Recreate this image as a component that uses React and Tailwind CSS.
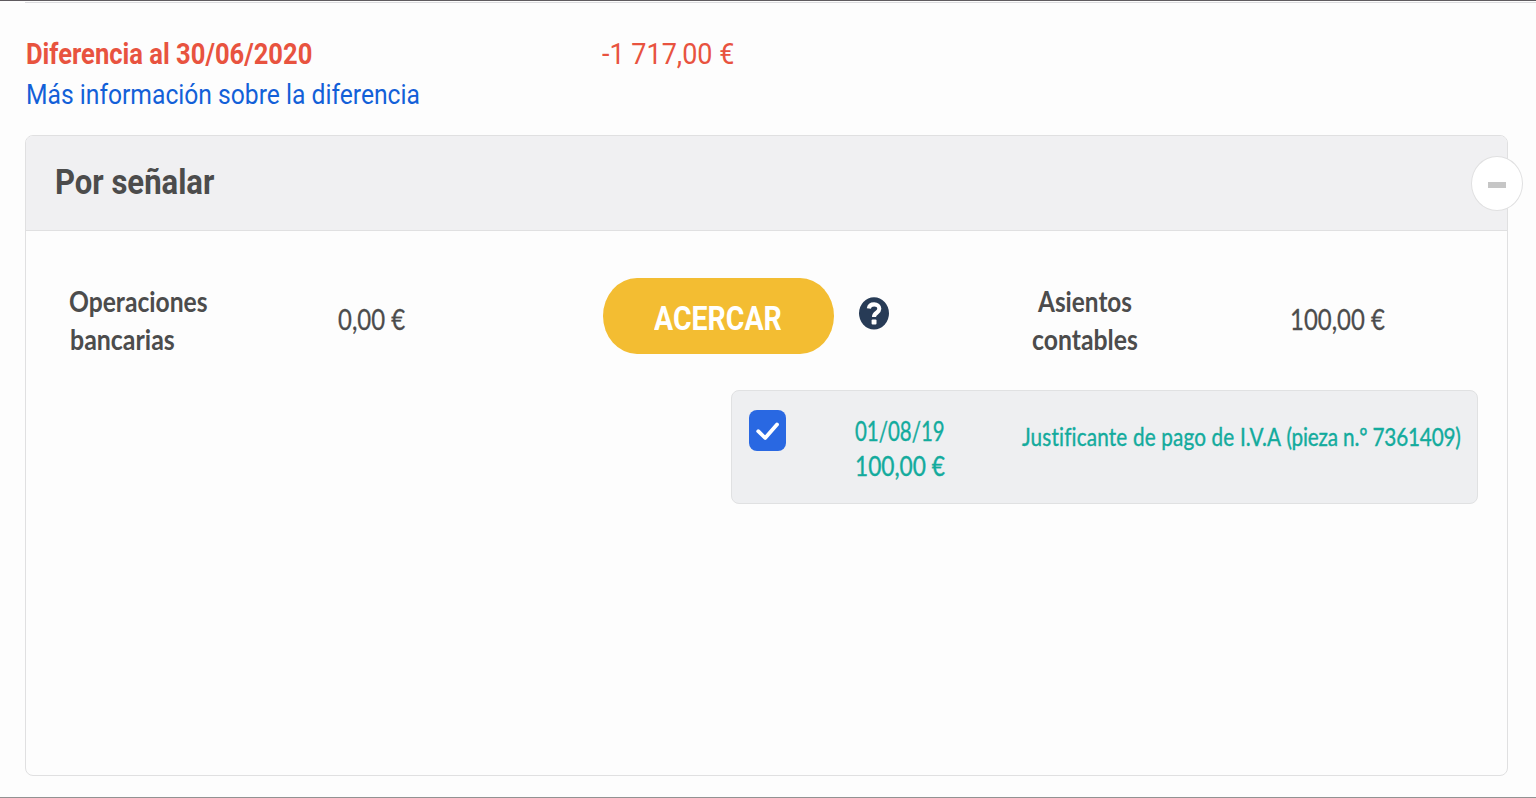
function Fit({ className = "", scale, children }) {
  return (
    <div className={className}>
      <span className={`inline-block origin-left whitespace-pre ${scale}`}>{children}</span>
    </div>
  );
}

export default function App() {
  return (
    <div className="h-[798px] w-[1536px] overflow-hidden border-t border-b border-t-[#5f5b5f] border-b-[#929292] bg-[#fdfdfd] font-['Roboto',sans-serif] text-[#4c4c4c]">
      <div className="ml-[25px] h-[2px] border-b border-[#dcdcdf]" />
      <div className="flex pt-[31px] pl-[26px] text-[#e8533f]">
        <Fit className="h-10 w-[576px] text-[29.5px] leading-10 font-bold" scale="scale-x-[0.866]">Diferencia al 30/06/2020</Fit>
        <Fit className="h-10 w-[140px] text-[30px] leading-10" scale="scale-x-[0.9]">-1 717,00 €</Fit>
      </div>
      <a className="block pt-px pl-[26px] text-[#1260d8]">
        <Fit className="h-10 w-[400px] text-[28.5px] leading-10" scale="scale-x-[0.865]">Más información sobre la diferencia</Fit>
      </a>
      <section className="mt-[20px] ml-[25px] h-[641px] w-[1483px] rounded-lg border border-[#e0e0e1]">
        <header className="flex h-[95px] items-center rounded-t-[7px] border-b border-[#e0e0e1] bg-[#f0f0f2] pl-[29px]">
          <h2 className="grow">
            <Fit className="h-12 w-[180px] text-[35px] leading-[48px] font-bold" scale="scale-x-[0.887]">Por señalar</Fit>
          </h2>
          <button className="-mr-[16px] flex h-[55px] w-[52px] items-center justify-center rounded-[50%] border border-[#e0e0e1] bg-white">
            <span className="mt-[3px] h-[6px] w-[18px] bg-[#c6c6c6]" />
          </button>
        </header>
        <div className="flex h-[159px] pt-[47px] pl-[43px] font-['Lato',sans-serif]">
          <div className="mt-1 w-[269px] text-[28px] leading-[38px] font-bold">
            <Fit className="h-[38px]" scale="scale-x-[0.88]">Operaciones</Fit>
            <Fit className="h-[38px] pl-px" scale="scale-x-[0.89]">bancarias</Fit>
          </div>
          <Fit className="mt-[22px] w-[265px] text-[28.5px] leading-[38px] [-webkit-text-stroke:0.3px]" scale="scale-x-[0.84]">0,00 €</Fit>
          <button className="flex h-[76px] w-[231px] rounded-[34px/38px] bg-[#f3bd32] pt-[17px] pl-[51px] font-['Roboto',sans-serif] text-[33.5px] leading-[47px] font-bold text-white">
            <Fit scale="scale-x-[0.85]">ACERCAR</Fit>
          </button>
          <svg className="mt-[19px] ml-[25px] h-[33px] w-[30px]" viewBox="0 0 30 33">
            <ellipse cx="15" cy="16.3" rx="15" ry="16.1" fill="#273b56" />
            <path d="M9.8 11.5C10.3 8.5 12.3 7.4 15.1 7.4c3 0 5.2 1.6 5.2 4.4 0 4.1-5.3 3.8-5.3 8.2" fill="none" stroke="#fff" strokeWidth="4.1" />
            <rect x="12.6" y="22.4" width="4.9" height="5" rx="1" fill="#fff" />
          </svg>
          <div className="mt-1 ml-[143px] w-[258px] text-[28px] leading-[38px] font-bold">
            <Fit className="h-[38px] pl-[6px]" scale="scale-x-[0.87]">Asientos</Fit>
            <Fit className="h-[38px]" scale="scale-x-[0.885]">contables</Fit>
          </div>
          <Fit className="mt-[22px] w-[120px] text-[28.5px] leading-[38px] [-webkit-text-stroke:0.3px]" scale="scale-x-[0.84]">100,00 €</Fit>
        </div>
        <div className="ml-[705px] flex h-[114px] w-[747px] rounded-lg border border-[#e0e1e2] bg-[#eeeff1] font-['Lato',sans-serif] text-[#13ab9d]">
          <span className="mt-[19px] ml-[17px] flex h-[41px] w-[37px] shrink-0 rounded-lg bg-[#2968e2]">
            <svg className="h-[41px] w-[37px]" viewBox="0 0 37 41" fill="none" stroke="#fff" strokeWidth="3.8" strokeLinecap="round" strokeLinejoin="round">
              <path d="M9.2 21.2L16.2 28L28 14.5" />
            </svg>
          </span>
          <div className="mt-[22px] ml-[69px] w-[167px] shrink-0 text-[27px] leading-[35px] [-webkit-text-stroke:0.4px]">
            <Fit className="h-[35px]" scale="scale-x-[0.757]">01/08/19</Fit>
            <Fit className="h-[35px]" scale="scale-x-[0.84]">100,00 €</Fit>
          </div>
          <Fit className="mt-[27px] w-[450px] shrink-0 text-[25px] leading-[36px] [font-variant-ligatures:none] [-webkit-text-stroke:0.4px]" scale="scale-x-[0.828]">
            <span className="tracking-[0.2px]">Justificante de pago de I.V.A</span>
            <span className="tracking-[-0.2px]"> (pieza n.º 7361409)</span>
          </Fit>
        </div>
      </section>
    </div>
  );
}
